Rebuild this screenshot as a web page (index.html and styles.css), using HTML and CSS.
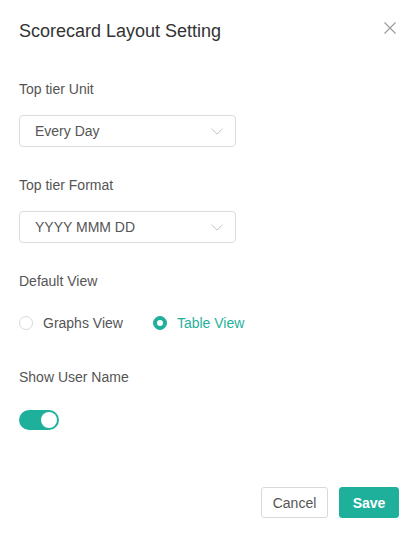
FILE: index.html
```html
<!DOCTYPE html>
<html lang="en">
<head>
<meta charset="utf-8">
<title>Scorecard Layout Setting</title>
<link rel="stylesheet" href="styles.css">
</head>
<body>
<div class="modal">
  <header class="modal-header">
    <h1 class="modal-title">Scorecard Layout Setting</h1>
    <button class="close-btn" aria-label="Close">
      <svg width="12" height="12" viewBox="0 0 12 12"><path d="M0.5 0.5 L11.5 11.5 M11.5 0.5 L0.5 11.5" stroke="#9a9a9a" stroke-width="1.1" fill="none"/></svg>
    </button>
  </header>
  <div class="modal-body">
    <div class="field">
      <div class="field-label">Top tier Unit</div>
      <div class="select">
        <span class="select-value">Every Day</span>
        <svg class="chevron" width="12" height="7" viewBox="0 0 12 7"><path d="M0.5 0.8 L6 6 L11.5 0.8" stroke="#c4c4c4" stroke-width="1" fill="none"/></svg>
      </div>
    </div>
    <div class="field">
      <div class="field-label">Top tier Format</div>
      <div class="select">
        <span class="select-value">YYYY MMM DD</span>
        <svg class="chevron" width="12" height="7" viewBox="0 0 12 7"><path d="M0.5 0.8 L6 6 L11.5 0.8" stroke="#c4c4c4" stroke-width="1" fill="none"/></svg>
      </div>
    </div>
    <div class="field">
      <div class="field-label">Default View</div>
      <div class="radio-group">
        <label class="radio"><span class="radio-dot"></span><span class="radio-text">Graphs View</span></label>
        <label class="radio radio-checked"><span class="radio-dot"></span><span class="radio-text">Table View</span></label>
      </div>
    </div>
    <div class="field field-switch">
      <div class="field-label">Show User Name</div>
      <div class="switch switch-on"><span class="switch-knob"></span></div>
    </div>
  </div>
  <footer class="modal-footer">
    <button class="btn btn-default">Cancel</button>
    <button class="btn btn-primary">Save</button>
  </footer>
</div>
</body>
</html>
```
FILE: styles.css
```css
* { box-sizing: border-box; }
html, body { margin: 0; padding: 0; background: #fff; }
body {
  font-family: "Liberation Sans", Arial, sans-serif;
  color: #555;
  width: 416px;
  height: 536px;
}
.modal {
  display: flex;
  flex-direction: column;
  height: 536px;
}
.modal-header {
  display: flex;
  justify-content: space-between;
  align-items: flex-start;
  padding: 19px 19px 0 19px;
}
.modal-title {
  margin: 0;
  font-size: 18px;
  line-height: 24px;
  font-weight: normal;
  color: #333;
}
.close-btn {
  border: 0;
  background: none;
  padding: 0;
  margin-top: 3px;
  margin-right: 1px;
  width: 12px;
  height: 12px;
  display: flex;
}
.modal-body {
  padding: 35px 19px 0 19px;
  flex: 1;
}
.field { margin-bottom: 27px; }
.field-label {
  font-size: 14px;
  line-height: 22px;
  color: #555;
  margin-bottom: 15px;
}
.select {
  width: 217px;
  height: 32px;
  border: 1px solid #dcdcdc;
  border-radius: 4px;
  display: flex;
  align-items: center;
  justify-content: space-between;
  padding: 0 12px 0 15px;
}
.select-value {
  font-size: 14px;
  color: #555;
}
.chevron { display: block; }
.radio-group {
  display: flex;
  gap: 30px;
  margin-top: 20px;
}
.field-label + .radio-group { margin-top: -15px; padding-top: 20px; }
.radio {
  display: flex;
  align-items: center;
  gap: 10px;
  font-size: 14px;
  line-height: 22px;
  color: #555;
}
.radio-dot {
  width: 14px;
  height: 14px;
  border: 1px solid #d9d9d9;
  border-radius: 50%;
  background: #fff;
  position: relative;
}
.radio-checked .radio-dot {
  border-color: #1fb09c;
  background: #1fb09c;
}
.radio-checked .radio-dot::after {
  content: "";
  position: absolute;
  width: 6px;
  height: 6px;
  border-radius: 50%;
  background: #fff;
  left: 3px;
  top: 3px;
}
.radio-checked .radio-text { color: #1fb09c; }
.field-switch { margin-top: 32px; }
.field-switch .field-label { margin-bottom: 22px; }
.switch {
  width: 40px;
  height: 20px;
  border-radius: 10px;
  background: #1fb09c;
  position: relative;
}
.switch-knob {
  position: absolute;
  width: 16px;
  height: 16px;
  border-radius: 50%;
  background: #fff;
  top: 2px;
  right: 2px;
}
.modal-footer {
  display: flex;
  justify-content: flex-end;
  gap: 11px;
  padding: 0 17px 18px 0;
}
.btn {
  font-family: "Liberation Sans", Arial, sans-serif;
  font-size: 14px;
  height: 31px;
  border-radius: 3px;
  cursor: pointer;
}
.btn-default {
  width: 67px;
  background: #fff;
  border: 1px solid #d9d9d9;
  color: #555;
}
.btn-primary {
  width: 60px;
  background: #1fb09c;
  border: 1px solid #1fb09c;
  color: #fff;
  font-weight: bold;
}
```
